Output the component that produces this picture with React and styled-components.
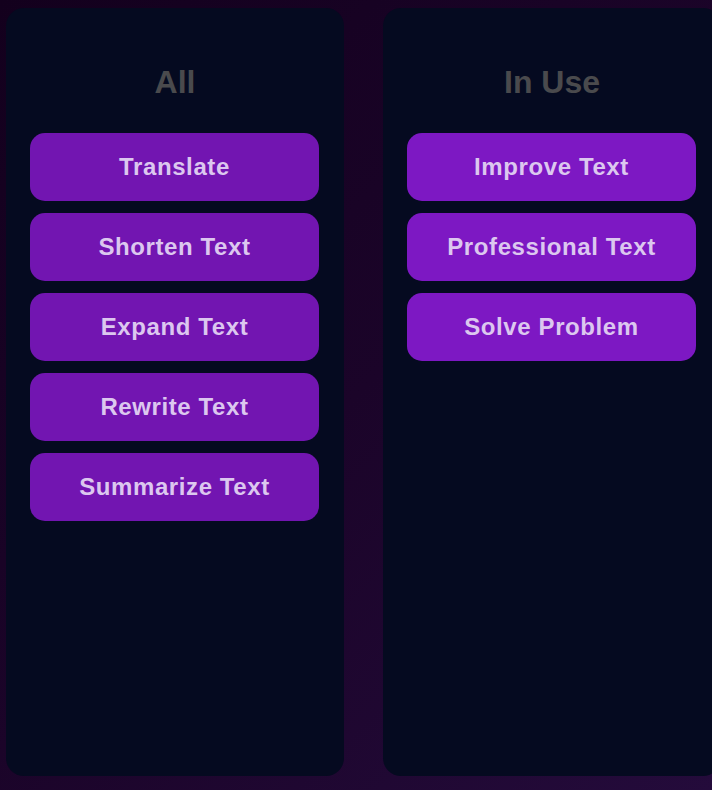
import styled, { createGlobalStyle } from "styled-components";

const GlobalStyle = createGlobalStyle`
  html, body {
    margin: 0;
    padding: 0;
    height: 100%;
    overflow: hidden;
  }

  body {
    background: linear-gradient(135deg, #13001d 0%, #1b0429 50%, #240b3b 100%);
    font-family: "Liberation Sans", Arial, sans-serif;
  }
`;

const Board = styled.div`
  display: flex;
  gap: 39px;
  padding: 8px 0 0 6px;
  width: max-content;
`;

const Column = styled.section`
  display: flex;
  flex-direction: column;
  align-items: stretch;
  box-sizing: border-box;
  width: 338px;
  height: 768px;
  padding: 56px 24px 0 24px;
  background: #050a20;
  border-radius: 18px;
`;

const Title = styled.h2`
  margin: 0 0 33px;
  font-size: 32px;
  line-height: 36px;
  font-weight: 700;
  text-align: center;
  color: #4a4a4d;
`;

const List = styled.div`
  display: flex;
  flex-direction: column;
  gap: 12px;
`;

const Item = styled.button`
  display: flex;
  align-items: center;
  justify-content: center;
  width: 289px;
  height: 68px;
  padding: 0;
  border: none;
  border-radius: 15px;
  background: ${({ $active }) => ($active ? "#7d18c3" : "#7215b1")};
  color: #dcc7ef;
  font-family: "Liberation Sans", Arial, sans-serif;
  font-size: 24px;
  font-weight: 700;
  letter-spacing: 0.6px;
  cursor: pointer;
`;

const all = ["Translate", "Shorten Text", "Expand Text", "Rewrite Text", "Summarize Text"];
const inUse = ["Improve Text", "Professional Text", "Solve Problem"];

const ToolColumn = ({ title, items, active }) => (
  <Column>
    <Title>{title}</Title>
    <List>
      {items.map((name) => (
        <Item key={name} $active={active}>
          {name}
        </Item>
      ))}
    </List>
  </Column>
);

export default function App() {
  return (
    <>
      <GlobalStyle />
      <Board>
        <ToolColumn title="All" items={all} />
        <ToolColumn title="In Use" items={inUse} active />
      </Board>
    </>
  );
}
